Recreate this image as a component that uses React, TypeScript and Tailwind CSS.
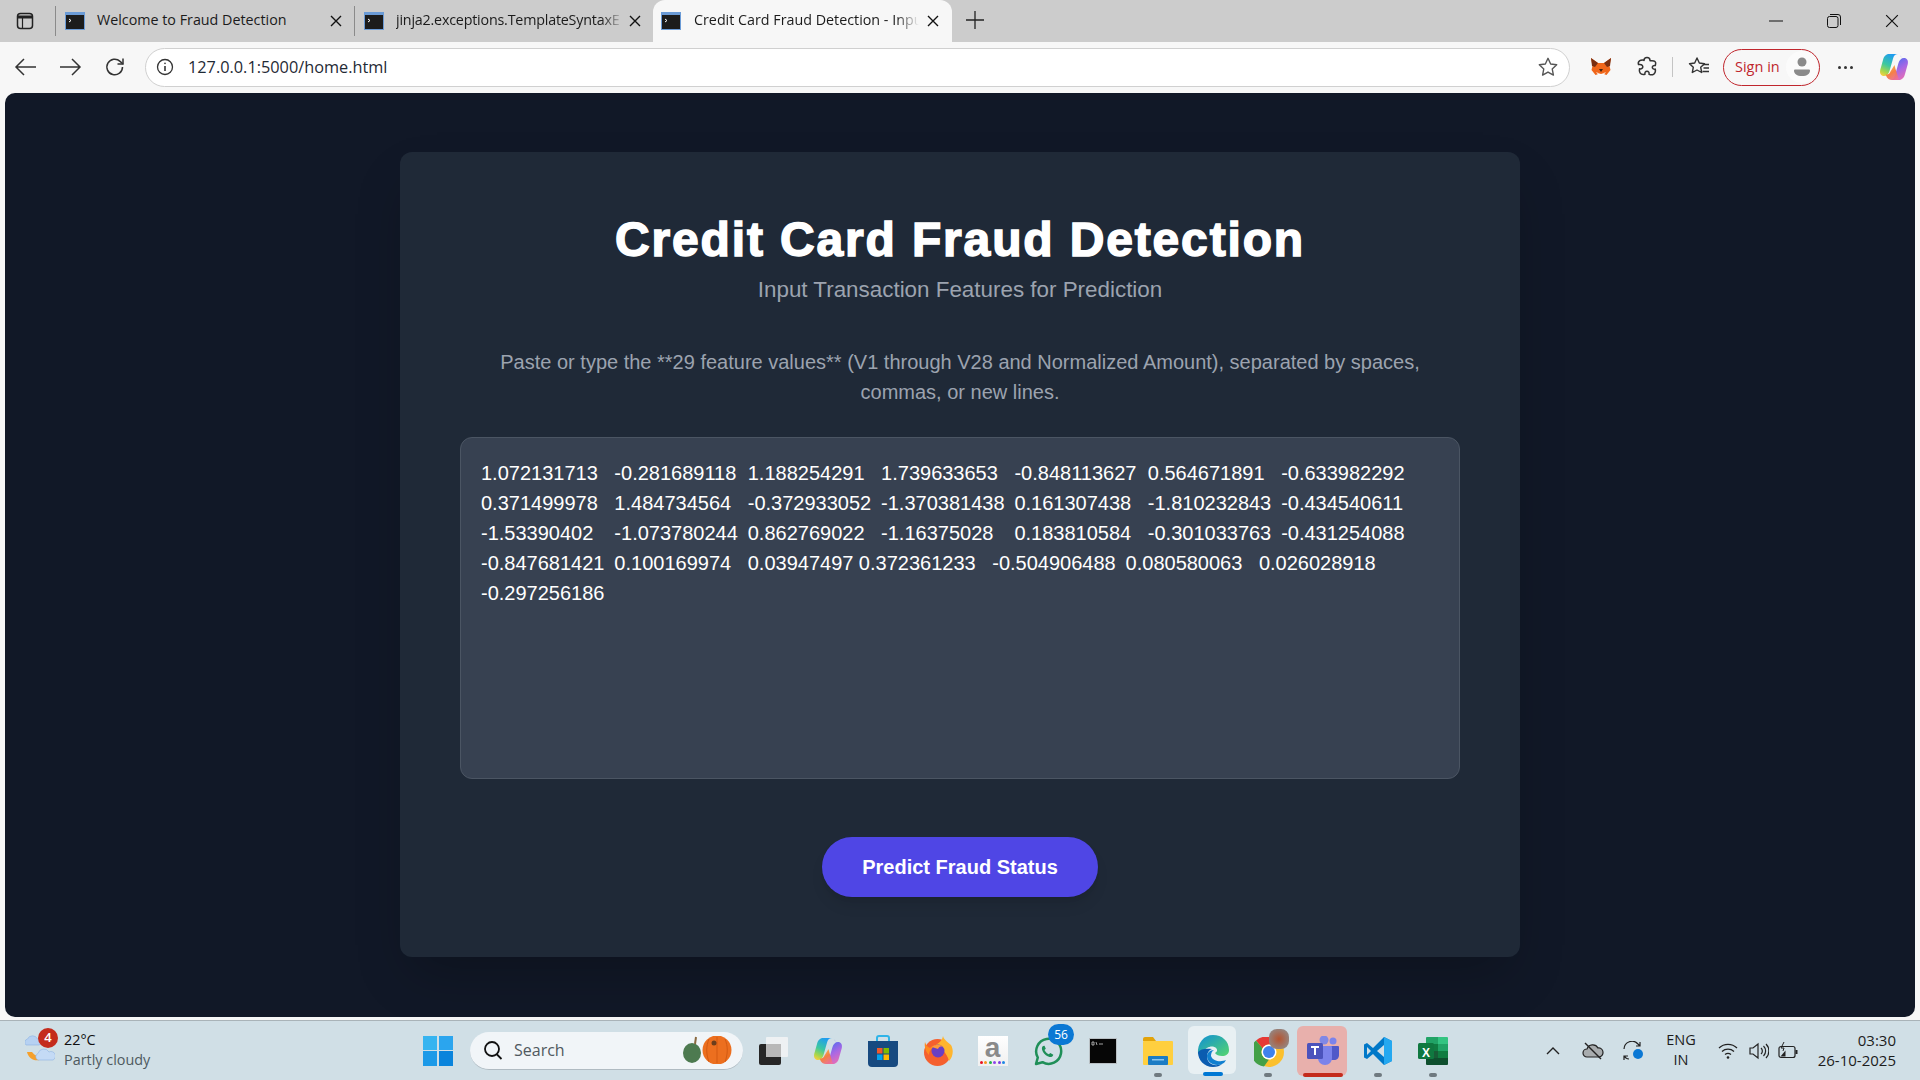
import React from "react";

const VALUES = "1.072131713\t-0.281689118\t1.188254291\t1.739633653\t-0.848113627\t0.564671891\t-0.633982292\t0.371499978\t1.484734564\t-0.372933052\t-1.370381438\t0.161307438\t-1.810232843\t-0.434540611\t-1.53390402\t-1.073780244\t0.862769022\t-1.16375028\t0.183810584\t-0.301033763\t-0.431254088\t-0.847681421\t0.100169974\t0.03947497\t0.372361233\t-0.504906488\t0.080580063\t0.026028918\t-0.297256186";

const ui = "font-['Open_Sans','Noto_Sans',sans-serif]";

function Favicon() {
  return (
    <svg width="20" height="18" viewBox="0 0 20 18" className="shrink-0">
      <rect width="20" height="18" fill="#6b9bd6" />
      <rect x="1" y="3" width="18" height="14" fill="#1c1c1c" />
      <path d="M4 7l2 1.5L4 10" stroke="#fff" strokeWidth="1" fill="none" />
    </svg>
  );
}

function X({ size = 12, w = 1.4 }: { size?: number; w?: number }) {
  return (
    <svg width={size} height={size} viewBox="0 0 12 12" className="shrink-0">
      <path d="M1 1l10 10M11 1L1 11" stroke="#111" strokeWidth={w} fill="none" />
    </svg>
  );
}

function Tab({ title, w, fade }: { title: string; w: string; fade?: boolean }) {
  return (
    <div className={`flex items-center h-[42px] pl-[9px] ${w}`}>
      <Favicon />
      <span className={`ml-3 w-[228px] pb-[3px] whitespace-nowrap text-[14.3px] text-[#1b1b1b] ${fade ? "tracking-[-0.2px] [mask-image:linear-gradient(to_right,black_90%,transparent_100%)]" : ""}`}>{title}</span>
      <span className="ml-[5px]"><X /></span>
    </div>
  );
}

function TitleBar() {
  return (
    <div className={`flex h-[42px] bg-[#cccccc] ${ui}`}>
      <div className="w-[55px] h-full flex items-center justify-center shrink-0 pr-[6px]">
        <svg width="18" height="18" viewBox="0 0 18 18">
          <rect x="1.5" y="1.5" width="15" height="15" rx="3" fill="none" stroke="#222" strokeWidth="1.5" />
          <path d="M1.5 5h15" stroke="#222" strokeWidth="3" />
          <path d="M6.5 5v11" stroke="#222" strokeWidth="1.2" />
        </svg>
      </div>
      <div className="w-px h-[30px] mt-[6px] bg-[#8a8a8a]" />
      <Tab title="Welcome to Fraud Detection" w="w-[298px]" />
      <div className="w-px h-[30px] mt-[6px] bg-[#8a8a8a]" />
      <Tab title="jinja2.exceptions.TemplateSyntaxE" w="w-[298px]" fade />
      <div className="w-[299px] h-[42px] bg-[#f7f7f7] rounded-t-xl flex items-center pl-2 text-[14.3px] text-[#1b1b1b]">
        <Favicon />
        <span className="ml-[13px] w-[225px] pb-[3px] whitespace-nowrap [mask-image:linear-gradient(to_right,black_90%,transparent_100%)]">Credit Card Fraud Detection - Inpu</span>
        <span className="ml-[8px]"><X /></span>
      </div>
      <div className="ml-[14px] h-full flex items-center pb-[2px]">
        <svg width="18" height="18" viewBox="0 0 18 18"><path d="M9 0v18M0 9h18" stroke="#222" strokeWidth="1.3" /></svg>
      </div>
      <div className="ml-auto flex items-center -mr-[1px]">
        <div className="w-[58px] flex justify-center"><svg width="14" height="2" viewBox="0 0 14 2"><path d="M0 1h14" stroke="#111" strokeWidth="1" /></svg></div>
        <div className="w-[58px] flex justify-center">
          <svg width="14" height="14" viewBox="0 0 14 14" fill="none" stroke="#111" strokeWidth="1"><rect x="0.5" y="2.5" width="10.5" height="11" rx="2" /><path d="M3 .5h8a2.5 2.5 0 0 1 2.5 2.5v8" /></svg>
        </div>
        <div className="w-[58px] flex justify-center"><X size={14} w={1} /></div>
      </div>
    </div>
  );
}

function Toolbar() {
  return (
    <div className={`flex items-center h-[51px] bg-[#f7f7f7] pb-[1px] pl-[14px] ${ui}`}>
      <svg width="24" height="20" viewBox="0 0 24 20" fill="none" stroke="#333" strokeWidth="1.5"><path d="M22 10H3M10 2l-8 8 8 8" /></svg>
      <svg className="ml-[20px]" width="24" height="20" viewBox="0 0 24 20" fill="none" stroke="#333" strokeWidth="1.5"><path d="M2 10h19M14 2l8 8-8 8" /></svg>
      <svg className="ml-[22px]" width="22" height="22" viewBox="0 0 22 22" fill="none" stroke="#333" strokeWidth="1.5"><path d="M18.5 11a7.8 7.8 0 1 1-2.4-5.6L19 8" /><path d="M19 2.5V8h-5.5" /></svg>
      <div className="ml-[19px] w-[1425px] h-[39px] bg-white border border-[#d0d0d0] rounded-[20px] flex items-center pl-[10px] pr-[8px]">
        <svg width="18" height="18" viewBox="0 0 18 18" fill="none" stroke="#333" strokeWidth="1.3"><circle cx="9" cy="9" r="7.5" /><path d="M9 8v5" strokeWidth="1.6" /><circle cx="9" cy="5.4" r="0.8" fill="#333" stroke="none" /></svg>
        <span className="ml-[14px] text-[16.3px] pt-[1px] text-[#1f2a35]">127.0.0.1:5000/home.html</span>
        <svg className="ml-auto mr-[2px]" width="22" height="22" viewBox="0 0 24 24" fill="none" stroke="#555" strokeWidth="1.5" strokeLinejoin="round"><path d="M12 2.5l2.9 6.2 6.6.8-4.9 4.6 1.3 6.7L12 17.5l-5.9 3.3 1.3-6.7L2.5 9.5l6.6-.8z" /></svg>
      </div>
      <svg className="ml-[20px]" width="22" height="22" viewBox="0 0 22 22">
        <path d="M1 2l7 5h6l7-5-1.5 8 1 4-4 5-3-1h-5l-3 1-4-5 1-4z" fill="#f0661a" />
        <path d="M1 2l7 5-3 4-3-1zM21 2l-7 5 3 4 3-1z" fill="#7a2e10" />
        <path d="M9 13l2 3 2-3z" fill="#3a2010" /><path d="M6 16l5 2 5-2-2 3H8z" fill="#ffffff" opacity=".75" />
      </svg>
      <svg className="ml-[24px]" width="22" height="22" viewBox="0 0 22 22" fill="none" stroke="#333" strokeWidth="1.5" strokeLinejoin="round"><path d="M8 4.5c0-4 6-4 6 0 0 .7 3.5-.5 5 1s.5 3 .3 4c-1.800-.4-3 .5-3 1.800s1.500 2.200 3 1.800c.4 2 .2 3.500-1.500 5-2 1.400-4 .5-4.800.2.500-1.600-.5-3-2-3s-2.500 1.400-2 3c-2 .6-4 0-5-1.500-1-1.400-.7-3-.5-4 2 .5 3.500-.8 3.300-2.300S4.500 8 2.500 8.600C2 7 2.300 5.600 3.800 4.600c1.500-.9 4.200-.6 4.200-.1z" /></svg>
      <div className="ml-[14px] w-px h-[20px] bg-[#c4c4c4]" />
      <svg className="ml-[15px]" width="22" height="22" viewBox="0 0 22 22" fill="none" stroke="#333" strokeWidth="1.4" strokeLinejoin="round"><path d="M9 2l2.300 5 5.200.7-3.800 3.600 1 5.200L9 14l-4.700 2.500 1-5.200L1.500 7.700 6.700 7z" /><path d="M15 8.500h6M15.500 12h5.500M14.500 15.500h6.500" /></svg>
      <div className="ml-[13px] w-[97px] h-[37px] rounded-full border-[1.5px] border-[#c0262d] flex items-center pl-[11px] pr-[1px]">
        <span className="text-[14.5px] text-[#c0262d] whitespace-nowrap">Sign in</span>
        <div className="ml-auto w-[32px] h-[32px] rounded-full bg-[#fbfbfb] flex items-center justify-center">
          <svg width="16" height="20" viewBox="0 0 16 20" fill="#8a8a8a"><circle cx="8" cy="5" r="4.500" /><path d="M1 12.500h14a1 1 0 0 1 1 1c0 3.500-3 5.500-8 5.500s-8-2-8-5.500a1 1 0 0 1 1-1z" /></svg>
        </div>
      </div>
      <div className="ml-[18px] flex gap-[3px]">
        <span className="w-[3px] h-[3px] rounded-full bg-[#333]" /><span className="w-[3px] h-[3px] rounded-full bg-[#333]" /><span className="w-[3px] h-[3px] rounded-full bg-[#333]" />
      </div>
      <span className="ml-[26px]"><Copilot size={30} id="c1" /></span>
    </div>
  );
}

function Copilot({ size, id }: { size: number; id: string }) {
  return (
    <svg width={size} height={size} viewBox="0 0 30 30" className="block">
      <defs>
        <linearGradient id={`${id}a`} x1="0.6" y1="0" x2="0.2" y2="1"><stop offset="0" stopColor="#1f9cf0" /><stop offset=".5" stopColor="#3cc8a0" /><stop offset=".8" stopColor="#a4d64e" /><stop offset="1" stopColor="#f4d03f" /></linearGradient>
        <linearGradient id={`${id}b`} x1="0.3" y1="0" x2="0.8" y2="1"><stop offset="0" stopColor="#4a6cf0" /><stop offset=".5" stopColor="#a868e4" /><stop offset="1" stopColor="#ee6fb0" /></linearGradient>
        <linearGradient id={`${id}c`} x1="0.2" y1="0" x2="0.8" y2="1"><stop offset="0" stopColor="#f9c24a" /><stop offset=".5" stopColor="#f57a3c" /><stop offset="1" stopColor="#ec6fa0" /></linearGradient>
      </defs>
      <path d="M10 2h9c-2.500 0-4 1.500-4.800 4L10.500 19c-.8 3-3 5-5.500 5-3 0-4.500-2.500-3.800-6L4 8c.8-3.500 3-6 6-6z" fill={`url(#${id}a)`} />
      <path d="M17 2c3 0 5 1.500 6 4.500l1.200 3.500c-2-.5-3.800.5-4.500 3L23 6.500C22 4 20 2 17 2z" fill={`url(#${id}b)`} />
      <path d="M25 6c3 0 4.500 2.500 3.800 6L26 22c-.8 3.500-3 6-6 6h-9c2.500 0 4-1.500 4.800-4l3.700-13c.8-3 3-5 5.500-5z" fill={`url(#${id}b)`} />
      <path d="M15.500 13l1 4 3.500 11h-7c-2.500 0-5-1.500-6-4.500l-.3-1c2.500.5 4-1 4.800-3z" fill={`url(#${id}c)`} opacity=".95" />
    </svg>
  );
}

function TaskIcon({ children, cls, under }: { children: React.ReactNode; cls?: string; under?: React.ReactNode }) {
  return (
    <div className={`relative w-[55px] h-[60px] flex items-center justify-center ${cls ?? ""}`}>
      {children}
      {under}
    </div>
  );
}

const pip = <span className="absolute bottom-[4px] left-1/2 -translate-x-1/2 w-[8px] h-[4px] rounded-full bg-[#6f7a80]" />;

function Taskbar() {
  return (
    <div className={`relative flex items-center h-[60px] bg-[#d0dfe6] border-t border-[#a9b3b8] ${ui}`}>
      <div className="relative w-[64px] h-full shrink-0">
        <svg className="absolute left-[25px] top-[13px]" width="30" height="28" viewBox="0 0 30 28">
          <path d="M1 11a3.500 3.500 0 0 1 1.500-6 5.500 5.500 0 0 1 10 0 3 3 0 0 1 1.500 6z" fill="#b6d1f2" stroke="#8fb4e3" strokeWidth=".6" />
          <path d="M2 18c1.500 7 10 12 18 5-6 1-10-1-13-5z" fill="#f5a02c" />
          <path d="M13 26a3.500 3.500 0 0 1 0-6.500 6 6 0 0 1 11-1.500 4 4 0 0 1 4 8z" fill="#c4daf5" stroke="#8fb4e3" strokeWidth=".6" />
        </svg>
        <span className="absolute left-[38px] top-[7px] w-[20px] h-[20px] rounded-full bg-[#c42b1c] text-white text-[13px] font-semibold flex items-center justify-center">4</span>
      </div>
      <div className="w-[150px] leading-[20px] text-[14.4px] shrink-0 pb-[2px]">
        <div className="text-[#111]">22°C</div>
        <div className="text-[#4e5a60]">Partly cloudy</div>
      </div>
      <div className="ml-[209px] w-[30px] h-[30px] grid grid-cols-2 gap-[1.500px] shrink-0">
        <span className="bg-[#36b4f0]" /><span className="bg-[#2ba5ee]" /><span className="bg-[#1c9ae8]" /><span className="bg-[#0a84dc]" />
      </div>
      <div className="ml-[17px] w-[273px] h-[38px] rounded-full bg-[#f1f5f8] border-b border-[#b0bbc2] flex items-center pl-[13px] pr-[11px] shrink-0">
        <svg width="20" height="20" viewBox="0 0 20 20" fill="none" stroke="#111" strokeWidth="1.800"><circle cx="9" cy="9" r="7" /><path d="M13.500 14l5 5" /></svg>
        <span className="ml-[11px] text-[16px] text-[#50595f]">Search</span>
        <svg className="ml-auto" width="50" height="28" viewBox="0 0 50 28">
          <ellipse cx="10" cy="17" rx="9" ry="10" fill="#4d7a50" />
          <path d="M13 8l1-7" stroke="#8a6a40" strokeWidth="2" />
          <circle cx="35" cy="14" r="14.500" fill="#ec6f1f" />
          <path d="M35 1v26M27 3c-3 7-3 15 0 23M43 3c3 7 3 15 0 23" stroke="#d35a12" fill="none" />
          <circle cx="32" cy="7" r="2.500" fill="#6b3d1c" />
        </svg>
      </div>
      <div className="ml-[2px] flex h-full shrink-0">
        <TaskIcon>
          <svg width="30" height="30" viewBox="0 0 30 30">
            <rect x="1" y="8" width="22" height="21" rx="2" fill="#262626" />
            <rect x="8" y="1" width="22" height="20" rx="1" fill="#f3f4f4" fillOpacity=".85" />
            <rect x="8" y="8" width="15" height="13" fill="#b8b8b8" />
          </svg>
        </TaskIcon>
        <TaskIcon><Copilot size={30} id="c2" /></TaskIcon>
        <TaskIcon>
          <svg width="30" height="32" viewBox="0 0 30 32">
            <path d="M9 7V3a2 2 0 0 1 2-2h8a2 2 0 0 1 2 2v4" fill="none" stroke="#2fb4e8" strokeWidth="2" />
            <path d="M0 6h30v22a4 4 0 0 1-4 4H4a4 4 0 0 1-4-4z" fill="#174a80" />
            <rect x="9" y="13" width="5.500" height="5.500" fill="#f0592b" /><rect x="15.500" y="13" width="5.500" height="5.500" fill="#7fba00" />
            <rect x="9" y="19.500" width="5.500" height="5.500" fill="#00a4ef" /><rect x="15.500" y="19.500" width="5.500" height="5.500" fill="#ffb900" />
          </svg>
        </TaskIcon>
        <TaskIcon>
          <svg width="30" height="30" viewBox="0 0 30 30">
            <circle cx="14.500" cy="16.500" r="13.500" fill="#f5602e" />
            <path d="M20 0c1 4 5 6 8 9 3 5 2 12-2 16-2-8-8-14-15-15 3-2 8-4 9-10z" fill="#ffb52e" />
            <path d="M2 6c1 3 2 5 5 6 3-3 6-3 8-3-5 2-9 5-9 10-3-3-5-8-4-13z" fill="#ff8a1f" />
            <circle cx="15" cy="15" r="6.500" fill="#6a3fc4" />
            <path d="M9 11c3-3 9-3 11 0-3-1-4 0-5 2z" fill="#ff9a3a" />
          </svg>
        </TaskIcon>
        <TaskIcon>
          <div className="w-[30px] h-[30px] bg-gradient-to-b from-[#ffffff] to-[#f0f0f0] flex flex-col items-center">
            <span className="text-[28px] leading-[24px] font-bold text-[#8a8a8a] font-['Liberation_Sans',sans-serif]">a</span>
            <div className="flex gap-[1.500px] mt-[1px]">
              <span className="w-[3px] h-[3px] rounded-full bg-[#e81123]" /><span className="w-[3px] h-[3px] rounded-full bg-[#f7941d]" /><span className="w-[3px] h-[3px] rounded-full bg-[#22b14c]" /><span className="w-[3px] h-[3px] rounded-full bg-[#8e44ec]" /><span className="w-[3px] h-[3px] rounded-full bg-[#7a3fe0]" /><span className="w-[3px] h-[3px] rounded-full bg-[#1e88e5]" />
            </div>
          </div>
        </TaskIcon>
        <TaskIcon>
          <svg className="mt-[2px]" width="30" height="30" viewBox="0 0 30 30" fill="none">
            <path d="M3 27l1.800-6.500A12.500 12.500 0 1 1 9.500 25.200z" stroke="#1f8f58" strokeWidth="2.500" strokeLinejoin="round" />
            <path d="M10 9c-1.500 1-1.500 3 0 6 1.500 2.500 4 4.500 6.500 5 2 .3 3.500-.8 3.800-2.300l-3-1.700-1.500 1.300c-2-.8-3.500-2.500-4.300-4.300l1.300-1.300-1.300-3z" fill="#1f8f58" />
          </svg>
          <span className="absolute top-[3px] left-[28px] w-[26px] h-[21px] rounded-full bg-[#0b78d4] text-white text-[12px] flex items-center justify-center">56</span>
        </TaskIcon>
        <TaskIcon>
          <svg width="28" height="26" viewBox="0 0 28 26">
            <rect width="28" height="26" fill="#b9c0c4" />
            <rect x="1" y="1" width="26" height="24" fill="#060606" />
            <path d="M3 4h2v3H3zM7 4l1 3M10 6h4" stroke="#ccc" strokeWidth=".8" fill="none" />
          </svg>
        </TaskIcon>
        <TaskIcon under={pip}>
          <svg width="30" height="28" viewBox="0 0 30 28">
            <path d="M0 2a2 2 0 0 1 2-2h8l3 4h-13z" fill="#e2a30a" />
            <rect y="4" width="30" height="24" rx="1" fill="#ffcf3f" />
            <rect x="5" y="19" width="20" height="9" rx="1" fill="#1b7cc4" />
            <rect x="9" y="22" width="12" height="1.500" fill="#8ac5ee" />
          </svg>
        </TaskIcon>
        <TaskIcon cls="before:content-[''] before:absolute before:left-[3px] before:top-[5px] before:w-[48px] before:h-[48px] before:rounded-md before:bg-[#e8f0f3]" under={<span className="absolute bottom-[5px] left-1/2 -translate-x-1/2 w-[20px] h-[4px] rounded-full bg-[#0078d4]" />}>
          <svg className="relative" width="32" height="32" viewBox="0 0 32 32">
            <defs>
              <linearGradient id="ed1" x1="0" y1="0" x2="1" y2="1"><stop offset="0" stopColor="#0f8fd6" /><stop offset="1" stopColor="#55d66e" /></linearGradient>
            </defs>
            <path d="M16 0c9 0 16 6 16 15 0 4-3 6-7 6-3 0-6-1-7-3 2-1 3-3 1-5-2-2-6-2-9 0C7 15 3 19 1 19 0 8 7 0 16 0z" fill="url(#ed1)" />
            <path d="M1 17c0 8 6 15 15 15 4 0 7-1 9-3-8 3-15 0-15-8 0-3 2-6 5-7-6-1-12 0-14 3z" fill="#0b5cb0" />
            <path d="M10 21c0 7 8 11 15 8 2-1 3-2 4-4-4 2-13 2-15-4 0-3 1-5 3-6-4 0-7 3-7 6z" fill="#1180d0" />
          </svg>
        </TaskIcon>
        <TaskIcon under={pip}>
          <svg width="30" height="30" viewBox="0 0 30 30" className="mt-[1px] ml-[2px]">
            <circle cx="15" cy="15" r="15" fill="#fbc02d" />
            <path d="M15 0a15 15 0 0 1 13 7.500H15a7.500 7.500 0 0 0-6.500 3.800L2 3.500A15 15 0 0 1 15 0z" fill="#e53935" />
            <path d="M2 3.500l6.500 7.800A7.500 7.500 0 0 0 15 22.500l-5 7A15 15 0 0 1 2 3.500z" fill="#43a047" />
            <circle cx="15" cy="15" r="7.500" fill="#fff" /><circle cx="15" cy="15" r="6" fill="#3f82ec" />
          </svg>
          <span className="absolute left-[29px] top-[8px] w-[20px] h-[20px] rounded-[8px] bg-[radial-gradient(circle,#b5532f,#8b9498)]" />
        </TaskIcon>
        <TaskIcon cls="before:content-[''] before:absolute before:left-[2px] before:top-[5px] before:w-[50px] before:h-[50px] before:rounded-md before:bg-[#e8b0ac]" under={<span className="absolute bottom-[4px] left-1/2 -translate-x-1/2 w-[40px] h-[4px] rounded-full bg-[#c42b1c]" />}>
          <svg className="relative" width="32" height="30" viewBox="0 0 32 30">
            <circle cx="26" cy="5" r="3.500" fill="#7b83eb" />
            <circle cx="17" cy="4" r="4.500" fill="#8088e6" />
            <path d="M22 10h9a1 1 0 0 1 1 1v8c0 3-2 5-5 5h-5z" fill="#5059c9" />
            <path d="M11 10h13a1 1 0 0 1 1 1v11c0 4-3 7-7 7s-7-3-7-7z" fill="#7b83eb" />
            <rect y="7" width="16" height="16" rx="1.500" fill="#4b53bc" />
            <path d="M4 11h8M8 11v8" stroke="#fff" strokeWidth="2" />
          </svg>
        </TaskIcon>
        <TaskIcon under={pip}>
          <svg width="30" height="30" viewBox="0 0 30 30">
            <path d="M21 1l8 4v20l-8 4-11-11-6 5-3-1.500v-13L4 7l6 5z" fill="#0078c8" />
            <path d="M21 1l8 4v20l-8 4z" fill="#24a8f0" />
            <path d="M21 9l-7 6 7 6z" fill="#d0dfe6" />
            <path d="M4 11l4 4-4 4z" fill="#d0dfe6" />
          </svg>
        </TaskIcon>
        <TaskIcon under={pip}>
          <svg width="30" height="28" viewBox="0 0 30 28">
            <path d="M8 1a1 1 0 0 1 1-1h11v7H8z" fill="#21a366" /><path d="M20 0h9a1 1 0 0 1 1 1v6H20z" fill="#33c481" />
            <rect x="8" y="7" width="12" height="7" fill="#107c41" /><rect x="20" y="7" width="10" height="7" fill="#21a366" />
            <rect x="8" y="14" width="12" height="7" fill="#185c37" /><rect x="20" y="14" width="10" height="7" fill="#107c41" />
            <path d="M8 21h22v6a1 1 0 0 1-1 1H9a1 1 0 0 1-1-1z" fill="#0e4f2e" />
            <rect y="6" width="16" height="16" rx="1.500" fill="#0f7840" />
          </svg>
          <span className="absolute left-[17px] top-[23px] text-white text-[12px] font-bold font-['Liberation_Sans',sans-serif]">X</span>
        </TaskIcon>
      </div>
      <svg className="ml-[86px]" width="14" height="8" viewBox="0 0 14 8" fill="none" stroke="#222" strokeWidth="1.400"><path d="M1 7l6-6 6 6" /></svg>
      <svg className="ml-[22px]" width="22" height="20" viewBox="0 0 22 20">
        <path d="M5 16a4 4 0 0 1 0-8 6 6 0 0 1 11-1 4.500 4.500 0 0 1 1 9z" fill="#a8acae" stroke="#222" strokeWidth="1.200" />
        <path d="M3 2l16 16" stroke="#222" strokeWidth="1.400" />
      </svg>
      <svg className="ml-[19px]" width="22" height="20" viewBox="0 0 22 20" fill="none" stroke="#222" strokeWidth="1.200">
        <path d="M1 8a8 8 0 0 1 14-5l2 2M17 1v4h-4M1 15l2 2a6 6 0 0 0 3 1M1 19v-4h4" />
        <circle cx="15" cy="13" r="5" fill="#0b78d4" stroke="none" />
      </svg>
      <div className="ml-[11px] w-[50px] text-center text-[14.5px] leading-[20px] text-[#1c1c1c] pb-[2px]"><div>ENG</div><div>IN</div></div>
      <svg className="ml-[12px]" width="20" height="16" viewBox="0 0 20 16" fill="none" stroke="#222" strokeWidth="1.300">
        <path d="M1 5a13 13 0 0 1 18 0M4 8.500a9 9 0 0 1 12 0M7 11.500a5 5 0 0 1 6 0" /><circle cx="10" cy="14.500" r="1.300" fill="#222" stroke="none" />
      </svg>
      <svg className="ml-[11px]" width="20" height="18" viewBox="0 0 20 18" fill="none" stroke="#222" strokeWidth="1.200">
        <path d="M1 6v6h3l5 4V2L4 6zM12 6a4 4 0 0 1 0 6M14.500 4a7 7 0 0 1 0 10M17 2a10 10 0 0 1 0 14" />
      </svg>
      <svg className="ml-[9px]" width="20" height="18" viewBox="0 0 20 18">
        <rect x="1" y="4.500" width="16" height="11" rx="2" fill="none" stroke="#222" strokeWidth="1.200" />
        <rect x="17.500" y="8" width="2" height="4" fill="#222" />
        <path d="M2.500 14.500l5-6v6z" fill="#222" /><path d="M6 0L3 6h3l-1 3" stroke="#222" fill="none" />
      </svg>
      <div className="ml-auto pr-[24px] pb-[2px] text-right text-[15px] leading-[20px] text-[#1c1c1c]"><div>03:30</div><div>26-10-2025</div></div>
    </div>
  );
}

export default function App() {
  return (
    <div className="w-[1920px] h-[1080px] overflow-hidden flex flex-col bg-[#f7f7f7]">
      <TitleBar />
      <Toolbar />
      <div className="flex-1 mx-[5px] mb-[3px] rounded-t-[10px] rounded-b-[10px] bg-[#111827] flex justify-center pt-[59px] font-['Liberation_Sans',sans-serif] min-h-0">
        <div className="w-[1120px] h-[805px] bg-[#1f2937] rounded-xl flex flex-col items-center px-[60px] pt-[61px] shadow-2xl">
          <h1 className="text-[48px] leading-[54px] font-extrabold text-white [-webkit-text-stroke:1.5px_white] tracking-[1.85px] whitespace-nowrap">Credit Card Fraud Detection</h1>
          <p className="mt-[9px] text-[22.400px] leading-[27px] text-[#9ca3af]">Input Transaction Features for Prediction</p>
          <p className="mt-[44px] text-[20px] leading-[30px] text-[#9ca3af] text-center">Paste or type the **29 feature values** (V1 through V28 and Normalized Amount), separated by spaces, commas, or new lines.</p>
          <textarea readOnly defaultValue={VALUES} className="mt-[30px] w-[1000px] h-[342px] shrink-0 bg-[#374151] border border-[#4b5563] rounded-xl p-5 text-[20px] leading-[30px] text-white resize-none outline-none" />
          <button className="mt-[58px] w-[276px] h-[60px] shrink-0 rounded-full bg-[#4f46e5] text-white text-[20px] font-bold shadow-lg">Predict Fraud Status</button>
        </div>
      </div>
      <Taskbar />
    </div>
  );
}
